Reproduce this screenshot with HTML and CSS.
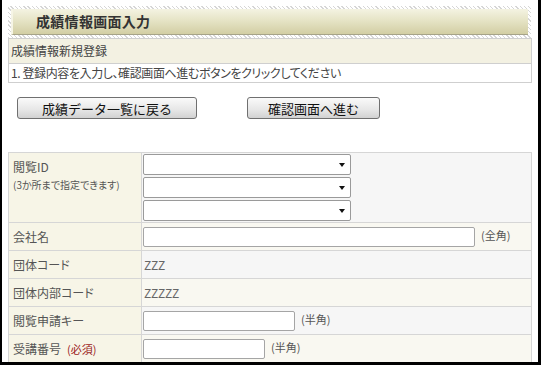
FILE: index.html
```html
<!DOCTYPE html>
<html lang="ja">
<head>
    <meta charset="UTF-8">
    <meta name="viewport" content="width=device-width, initial-scale=1.0">
    <title>成績情報画面入力</title>
    <link rel="stylesheet" href="styles.css">
</head>
<body>
    <div class="frame">
        <!-- Title -->
        <div class="title-wrap">
            <h1 class="title-bar">成績情報画面入力</h1>
        </div>
        <div class="subtitle">成績情報新規登録</div>
        <div class="message">1. 登録内容を入力し、確認画面へ進むボタンをクリックしてください</div>

        <!-- Buttons -->
        <div class="buttons">
            <button class="btn btn-back">成績データ一覧に戻る</button>
            <button class="btn btn-next">確認画面へ進む</button>
        </div>

        <!-- Form -->
        <table class="form">
            <tr class="row-ids">
                <th class="top">閲覧ID<span class="note">(3か所まで指定できます)</span></th>
                <td class="gray">
                    <div class="select-list">
                        <span class="select-wrap"><select></select></span>
                        <span class="select-wrap"><select></select></span>
                        <span class="select-wrap"><select></select></span>
                    </div>
                </td>
            </tr>
            <tr>
                <th>会社名</th>
                <td class="cream"><input type="text" class="input-long"><span class="hint">(全角)</span></td>
            </tr>
            <tr>
                <th>団体コード</th>
                <td class="gray"><span class="value">ZZZ</span></td>
            </tr>
            <tr>
                <th>団体内部コード</th>
                <td class="cream"><span class="value">ZZZZZ</span></td>
            </tr>
            <tr>
                <th>閲覧申請キー</th>
                <td class="gray"><input type="text" class="input-mid"><span class="hint">(半角)</span></td>
            </tr>
            <tr>
                <th>受講番号<span class="required">(必須)</span></th>
                <td class="cream"><input type="text" class="input-short"><span class="hint">(半角)</span></td>
            </tr>
        </table>
    </div>
</body>
</html>
```

FILE: styles.css
```css
body {
    margin: 0;
    font-family: "Noto Sans CJK JP", "Liberation Sans", sans-serif;
    font-feature-settings: "palt";
    background-color: #fff;
}

.frame {
    width: 541px;
    height: 365px;
    box-sizing: border-box;
    border-left: 2px solid #000;
    border-right: 3px solid #000;
    border-bottom: 3px solid #000;
    padding: 6px 6px 0 6px;
    overflow: hidden;
}

/* Title bar with hatched shadow */
.title-wrap {
    padding: 3px;
    margin-right: 1px;
    background: repeating-linear-gradient(45deg, #d6d6d6 0 1px, #fff 1px 3px);
}

.title-bar {
    margin: 0;
    height: 25px;
    line-height: 25px;
    padding-left: 23px;
    font-size: 14px;
    font-weight: bold;
    letter-spacing: 0.3px;
    color: #333;
    background: linear-gradient(#f4f3e2, #e6e4c6 45%, #d2cea4);
    border-left: 2px solid #f6f5e6;
    border-bottom: 1px solid #a6a388;
}

.subtitle {
    height: 24px;
    line-height: 24px;
    padding-left: 2px;
    font-size: 12px;
    color: #444;
    background-color: #f3f1e2;
    border: 1px solid #cfcfcf;
}

.message {
    height: 18px;
    line-height: 18px;
    padding-left: 2px;
    font-size: 12px;
    letter-spacing: -0.4px;
    color: #444;
    background-color: #fff;
    border: 1px solid #cfcfcf;
    border-top: none;
}

/* Buttons */
.buttons {
    display: flex;
    gap: 50px;
    margin: 14px 0 33px 9px;
}

.btn {
    height: 22px;
    padding: 0;
    font-family: inherit;
    font-size: 13px;
    color: #111;
    border: 1px solid #707070;
    border-radius: 3px;
    background: linear-gradient(#fafafa, #e6e6e6 60%, #d2d2d2);
}

.btn-back {
    width: 180px;
}

.btn-next {
    width: 133px;
}

/* Form table */
.form {
    width: 524px;
    border-collapse: collapse;
    font-size: 12px;
}

.form th,
.form td {
    border: 1px solid #d6d6d6;
    height: 27px;
    padding: 0 2px;
    vertical-align: middle;
}

.form th {
    width: 126px;
    text-align: left;
    font-weight: normal;
    color: #555;
    background-color: #f7f5e7;
    padding-left: 4px;
}

.form th.top {
    vertical-align: top;
    padding-top: 5px;
    height: 64px;
}

.form td {
    padding-left: 1px;
}

.form td.gray {
    background-color: #f6f6f6;
}

.form td.cream {
    background-color: #f9f8f1;
}

.note {
    display: block;
    font-size: 10px;
    margin-top: 2px;
}

.required {
    margin-left: 6px;
    font-size: 11px;
    color: #9b1b1b;
}

.value {
    margin-left: 1px;
    color: #666;
}

.hint {
    margin-left: 6px;
    font-size: 11px;
    color: #555;
}

/* Selects */
.select-list {
    display: flex;
    flex-direction: column;
    gap: 2px;
    padding: 1px 0;
}

.select-wrap {
    position: relative;
    width: 208px;
    height: 21px;
}

.select-wrap select {
    appearance: none;
    width: 208px;
    height: 21px;
    border: 1px solid #9a9a9a;
    border-radius: 2px;
    background-color: #fff;
}

.select-wrap::after {
    content: "";
    position: absolute;
    right: 6px;
    top: 9px;
    border-left: 3px solid transparent;
    border-right: 3px solid transparent;
    border-top: 4px solid #111;
}

/* Text inputs */
input[type="text"] {
    height: 20px;
    box-sizing: border-box;
    border: 1px solid #a5a5a5;
    border-radius: 2px;
    background-color: #fff;
    vertical-align: middle;
}

.input-long {
    width: 332px;
}

.input-mid {
    width: 152px;
}

.input-short {
    width: 122px;
}
```
